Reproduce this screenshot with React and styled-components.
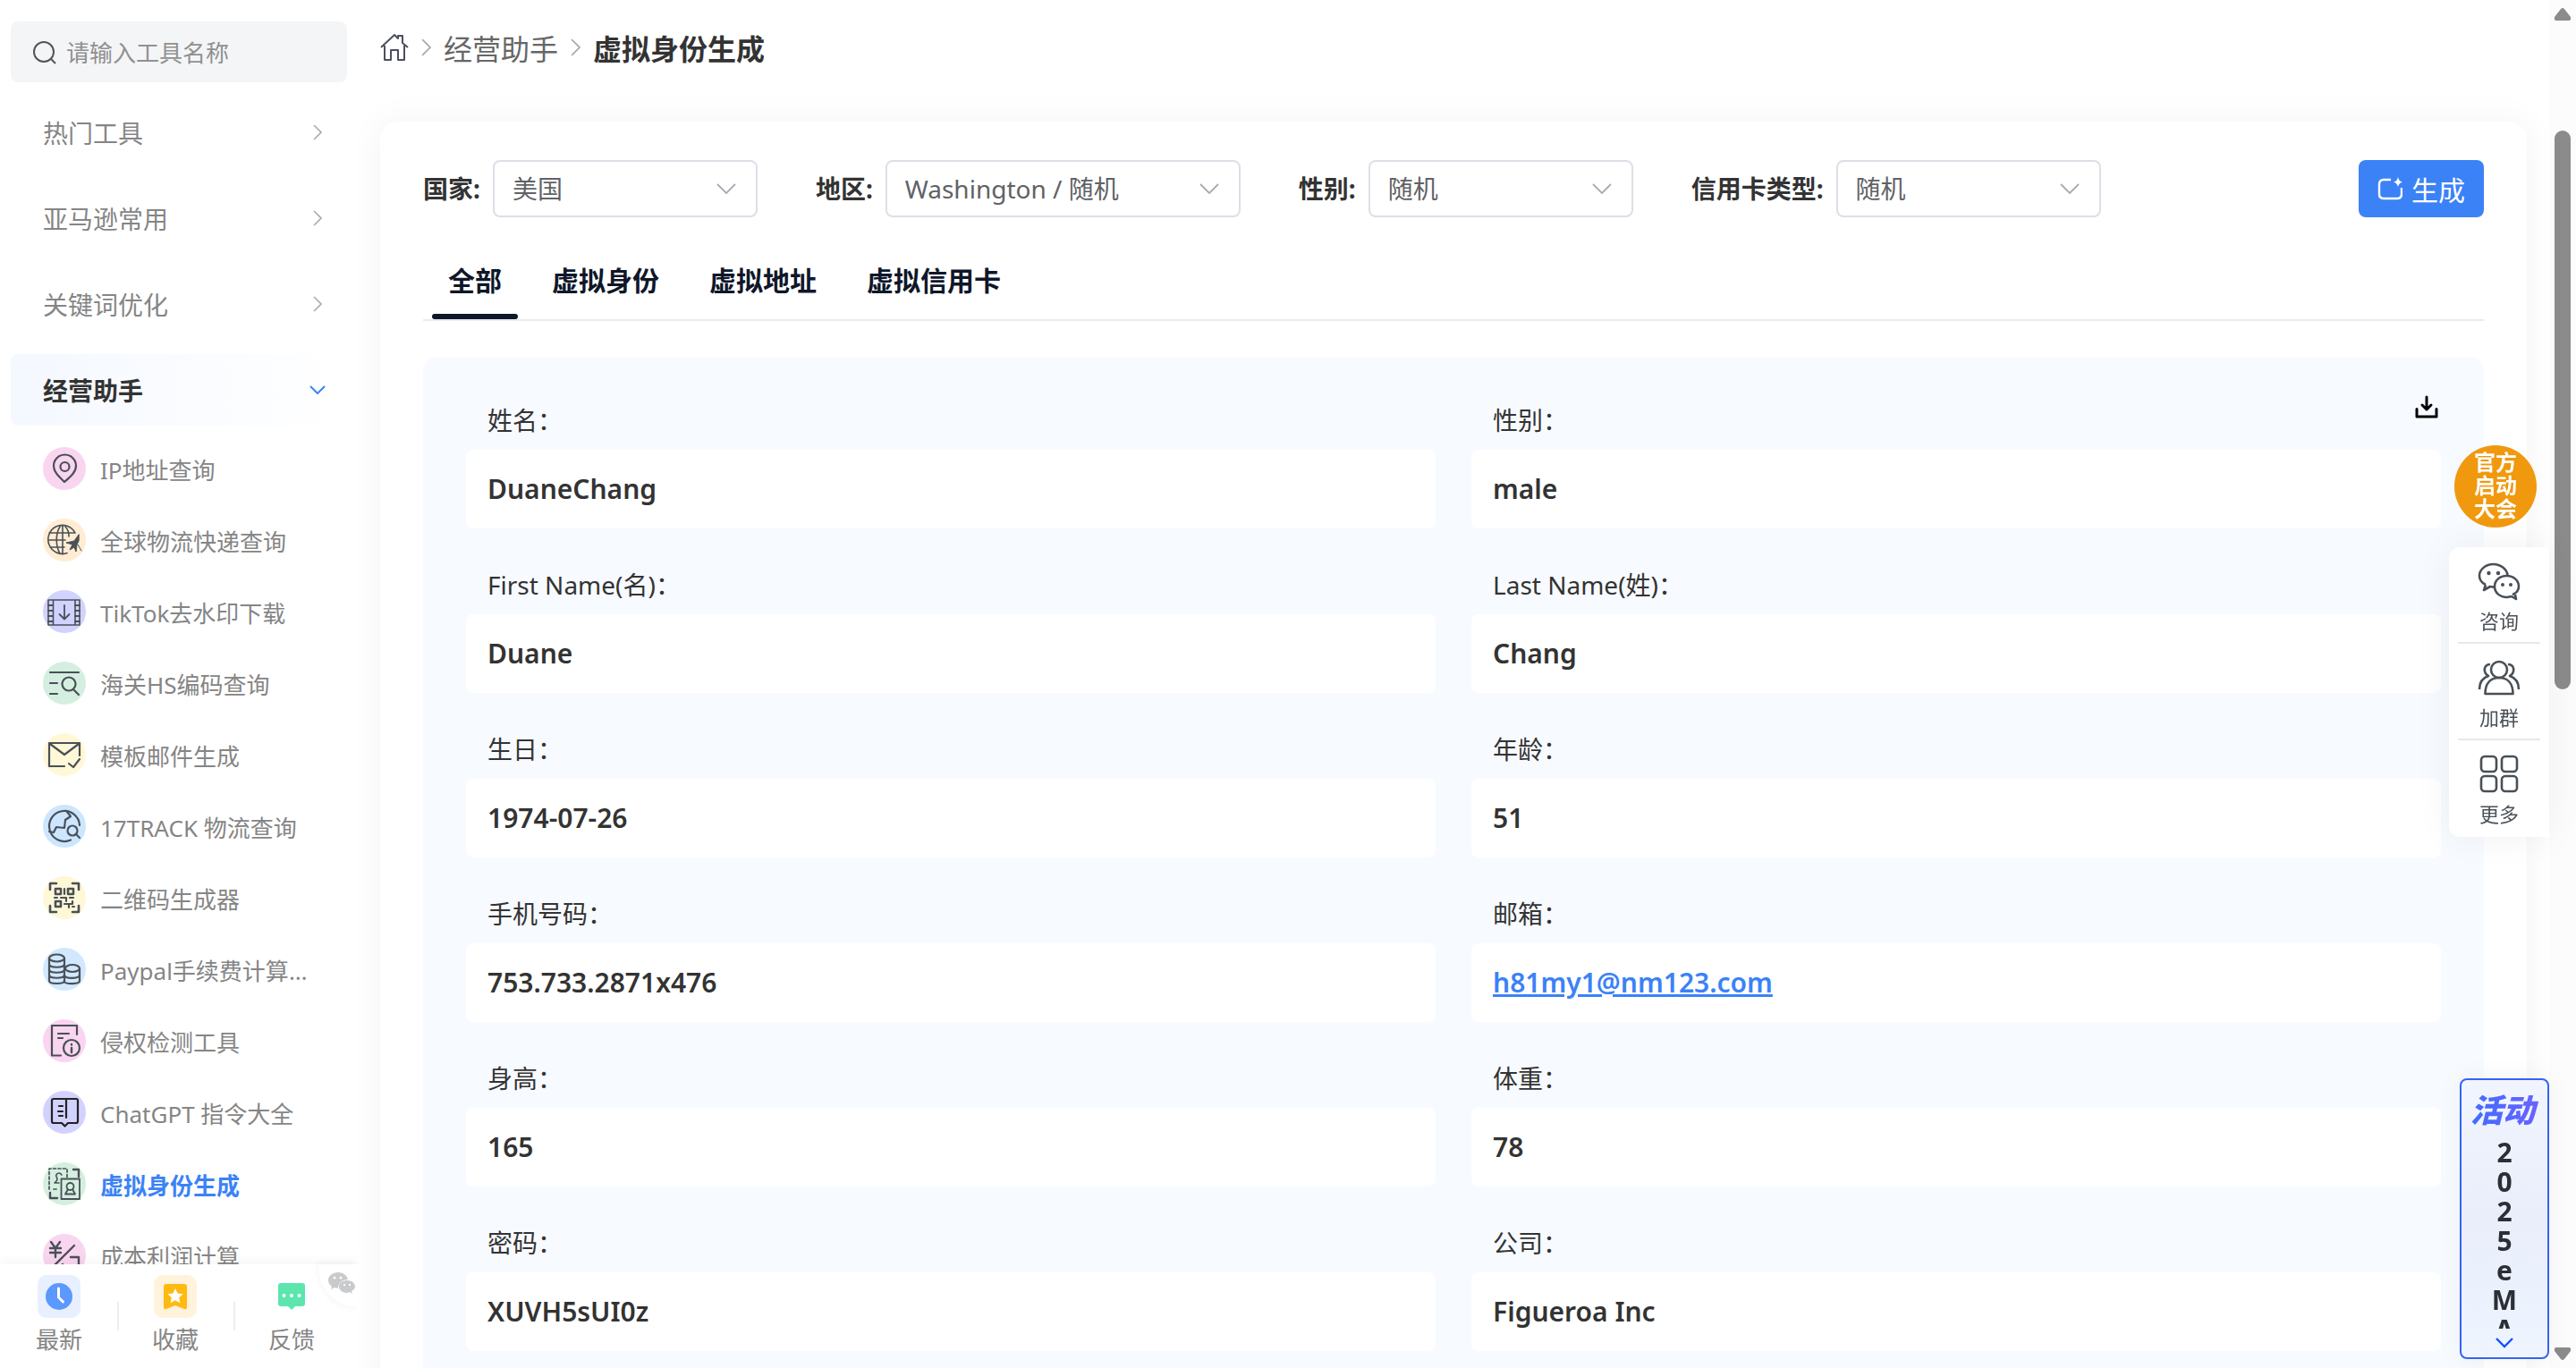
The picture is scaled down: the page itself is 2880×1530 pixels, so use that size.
import { useState } from "react";
import styled, { createGlobalStyle, css } from "styled-components";

const groups = ["热门工具", "亚马逊常用", "关键词优化"];

const tools = [
  { name: "IP地址查询", bg: "#f9d5f0", icon: "pin" },
  { name: "全球物流快递查询", bg: "#ffecd2", icon: "globe" },
  { name: "TikTok去水印下载", bg: "#d2d2ff", icon: "film" },
  { name: "海关HS编码查询", bg: "#d4efdf", icon: "search" },
  { name: "模板邮件生成", bg: "#fff8d6", icon: "mail" },
  { name: "17TRACK 物流查询", bg: "#cce6ff", icon: "track" },
  { name: "二维码生成器", bg: "#fff8d6", icon: "qr" },
  { name: "Paypal手续费计算器", bg: "#d2e8ff", icon: "coins" },
  { name: "侵权检测工具", bg: "#f9d5f0", icon: "doc" },
  { name: "ChatGPT 指令大全", bg: "#d2d2ff", icon: "book" },
  { name: "虚拟身份生成", bg: "#d4efdf", icon: "identity", active: true },
  { name: "成本利润计算", bg: "#f9d5f0", icon: "yen" },
];

const filters = [
  { id: "country", label: "国家:", value: "美国" },
  { id: "region", label: "地区:", value: "Washington / 随机", wide: true },
  { id: "gender", label: "性别:", value: "随机" },
  { id: "card", label: "信用卡类型:", value: "随机" },
];

const tabs = ["全部", "虚拟身份", "虚拟地址", "虚拟信用卡"];

const fields = [
  ["姓名：", "DuaneChang"],
  ["性别：", "male"],
  ["First Name(名)：", "Duane"],
  ["Last Name(姓)：", "Chang"],
  ["生日：", "1974-07-26"],
  ["年龄：", "51"],
  ["手机号码：", "753.733.2871x476"],
  ["邮箱：", "h81my1@nm123.com", true],
  ["身高：", "165"],
  ["体重：", "78"],
  ["密码：", "XUVH5sUI0z"],
  ["公司：", "Figueroa Inc"],
];

// every tool icon is drawn on a 48 x 48 board, the size of its circle
const toolIcons = {
  pin: (
    <>
      <path d="M24 39C18 33 12 28 12 21a12 12 0 0 1 25 0c0 7-6 12-13 18Z" />
      <circle cx="24.500" cy="22" r="5" />
    </>
  ),
  globe: (
    <>
      <path d="M36 16A16 16 0 1 0 27 38.500M22 8v32M7 16h29M7 24h18M8 32h16M19 9c-5 8-5 22 0 30M25 9c3 3 4 7 4 11" strokeWidth="1.600" />
      <path d="m40 18-5 7-9 2 7 2-3 6 5-3 2 5 1-8 2-4Zm-1 11 4 7" fill="#495057" strokeWidth="1" />
    </>
  ),
  film: (
    <>
      <path d="M6 11h35v28H6ZM11.500 11v28M36 11v28" strokeWidth="1.600" />
      <path d="M6 17h5M6 23h5M6 29h5M6 35h5M36 17h5M36 23h5M36 29h5M36 35h5" />
      <path d="M24 17v15M18.500 27l5.500 5.500 5.500-5.500" strokeWidth="1.800" />
    </>
  ),
  search: (
    <>
      <path d="M8 12h32M8 24h8M8 36h8" />
      <circle cx="29" cy="25" r="7.500" />
      <path d="m34 31 6 6" />
    </>
  ),
  mail: (
    <>
      <path d="M24 37H7V11h34v14M8 12l16 12L40 12" />
      <path d="m29 34 5 4 7-9" />
    </>
  ),
  track: (
    <>
      <path d="M41 23A17 17 0 1 0 31 39.500" />
      <path d="M27 8l4 5-6 4-1 9-9-1-3 6-5-1" />
      <circle cx="33" cy="29" r="5.500" />
      <path d="m37 33 4 4" />
    </>
  ),
  qr: (
    <>
      <path d="M8 15V8h7M33 8h7v7M40 33v7h-7M15 40H8v-7" strokeWidth="2.600" />
      <path d="M14 14h6v6h-6ZM28 14h6v6h-6ZM14 28h6v6h-6Z" strokeWidth="2.600" />
      <path d="M24 14v6M13 24h3M20 24h6v4M30 24h4M24 31h5v4M33 28v3h-4M33 34h2" strokeWidth="2.200" />
    </>
  ),
  coins: (
    <>
      <ellipse cx="15.500" cy="11.500" rx="8.500" ry="4" />
      <path d="M7 12v25c0 4 17 4 17 0V12M7 18c0 5 17 5 17 0M7 24c0 5 17 5 17 0M7 30c0 5 17 5 17 0" />
      <ellipse cx="33" cy="23" rx="8" ry="4" />
      <path d="M41 23v14c0 4-15 4-17 1M41 30c0 5-15 5-17 1" />
    </>
  ),
  doc: (
    <>
      <path d="M20 40.500H10V7h28v10M17 16h12M17 21h5" />
      <circle cx="32" cy="32" r="9" />
      <path d="M32 28v.500M32 32v5" strokeWidth="2.400" />
    </>
  ),
  book: (
    <g stroke="#222">
      <path d="M12 9h25q2 0 2 2v23q0 2-2 2h-9l-3.500 3.500L21 36h-9q-2 0-2-2V11q0-2 2-2ZM26 9v21" />
      <path d="M18 17h4M17 23h5M18 28h4" />
    </g>
  ),
  identity: (
    <>
      <path d="M7 30V7h20v10M12 30h4" strokeDasharray="3 2.500" strokeWidth="1.700" />
      <path d="M34 8h6v8M8 34v6h8" strokeWidth="2.400" />
      <path d="M21 14c-3-4-7-1-6 2 1 2 2 3 0 5l-2 2h5" strokeWidth="1.600" />
      <path d="M20.500 18.500H41V41H20.500Z" strokeWidth="1.800" />
      <circle cx="30.500" cy="27" r="4" strokeWidth="1.800" />
      <path d="M28 30l-3 5.500h11L33 30" strokeWidth="1.800" />
    </>
  ),
  yen: (
    <>
      <path d="m9 9 5 7 5-7M14 16v10M8 16h12M8 21h12M13 35l22-22" strokeWidth="2.400" />
      <path d="M31 26h9v11M22 34v6" strokeWidth="2.400" />
    </>
  ),
};

function ChevronDown() {
  return (
    <svg width="22" height="12" viewBox="0 0 22 12" fill="none" stroke="currentColor" strokeWidth="1.800">
      <path d="m1 1 10 10L21 1" />
    </svg>
  );
}

function ChevronRight({ size = 18 }) {
  return (
    <svg width={size / 2 + 1} height={size} viewBox="0 0 10 18" fill="none" stroke="#a8abb2" strokeWidth="1.600">
      <path d="m1 1 8 8-8 8" />
    </svg>
  );
}

function Field({ label, value, isLink }) {
  return (
    <FieldItem>
      <FieldLabel>{label}</FieldLabel>
      <FieldValue>
        {isLink ? <MailLink href={"mailto:" + value}>{value}</MailLink> : value}
      </FieldValue>
    </FieldItem>
  );
}

function Sidebar() {
  return (
    <SidebarWrap>
      <SearchBox>
        <svg width="28" height="28" viewBox="0 0 28 28" fill="none" stroke="#555" strokeWidth="2">
          <circle cx="13" cy="13" r="11" />
          <path d="m21 21 5 5" />
        </svg>
        <SearchInput type="text" aria-label="请输入工具名称" placeholder="请输入工具名称" />
      </SearchBox>
      {groups.map((name) => (
        <Group key={name}>
          {name}
          <ChevronRight />
        </Group>
      ))}
      <Group $open>
        经营助手
        <svg width="18" height="10" viewBox="0 0 18 10" fill="none" stroke="#3b82f6" strokeWidth="2">
          <path d="m1 1 8 8 8-8" />
        </svg>
      </Group>
      <ToolList>
        {tools.map((tool) => (
          <li key={tool.name}>
            <ToolLink href="#" $active={tool.active}>
              <ToolIcon viewBox="0 0 48 48">
                <circle cx="24" cy="24" r="24" fill={tool.bg} stroke="none" />
                {toolIcons[tool.icon]}
              </ToolIcon>
              <ToolName>{tool.name}</ToolName>
            </ToolLink>
          </li>
        ))}
      </ToolList>
      <BottomBar>
        <BottomButton>
          <BottomIcon $bg="#e8f0ff">
            <svg width="32" height="32" viewBox="0 0 32 32">
              <circle cx="16" cy="16" r="15" fill="#5b98ff" />
              <path d="M15.500 7v10l5 5" fill="none" stroke="#fff" strokeWidth="3" strokeLinecap="round" />
            </svg>
          </BottomIcon>
          最新
        </BottomButton>
        <BottomButton>
          <BottomIcon $bg="#fff3dc">
            <svg width="32" height="32" viewBox="0 0 32 32">
              <path d="M6 2h20q3 0 3 3v23q0 3-3 2l-10-4-10 4q-3 1-3-2V5q0-3 3-3Z" fill="#ffb910" />
              <path d="m16 7 2.600 5.500 6 .7-4.400 4.100 1.200 6-5.400-3-5.400 3 1.200-6-4.400-4.100 6-.7Z" fill="#fff" />
            </svg>
          </BottomIcon>
          收藏
        </BottomButton>
        <BottomButton>
          <BottomIcon>
            <svg width="32" height="32" viewBox="0 0 32 32">
              <path d="M4 1h24q3 0 3 3v20q0 3-3 3h-8l-4 4-4-4H4q-3 0-3-3V4q0-3 3-3Z" fill="#5ce6ae" />
              <g fill="#fff">
                <circle cx="7.500" cy="15" r="2" />
                <circle cx="16" cy="15" r="2" />
                <circle cx="24.500" cy="15" r="2" />
              </g>
            </svg>
          </BottomIcon>
          反馈
        </BottomButton>
        <CornerBadge>
          <svg width="30" height="25" viewBox="0 0 30 25" fill="#c8cacb">
            <path d="M11 0C5 0 0 4 0 9c0 3 2 5 4 7l-1 3 4-2 4 1c0-6 5-10 11-10C21 3 16 0 11 0Z" />
            <path d="M21 9c-5 0-9 3-9 7s4 7 9 7l3-1 3 2-1-3c2-1 4-3 4-5 0-4-4-7-9-7Z" />
            <g fill="#fff">
              <circle cx="7" cy="6" r="1.500" />
              <circle cx="14" cy="6" r="1.500" />
              <circle cx="18" cy="14" r="1.200" />
              <circle cx="24" cy="14" r="1.200" />
            </g>
          </svg>
        </CornerBadge>
      </BottomBar>
    </SidebarWrap>
  );
}

function FloatingTools() {
  return (
    <Floating>
      <EventBadge href="#">官方启动大会</EventBadge>
      <Dock>
        <DockButton>
          <DockIcon viewBox="0 0 48 44">
            <path d="M9 26c-4-2-7-6-7-10C2 9 9 3 17.500 3 26 3 33 9 33.500 15.500M9 26l-2 6 7-4 6 1" />
            <path d="M39 37c5-2 7-5 7-9 0-7-6-12-13.500-12S19 21 19 28s6 12 14 12l5-1 5 3-1-5" />
            <g fill="#495057" stroke="none">
              <circle cx="12.500" cy="13" r="2.200" />
              <circle cx="23" cy="13" r="2.200" />
              <circle cx="28" cy="26" r="2" />
              <circle cx="37" cy="26" r="2" />
            </g>
          </DockIcon>
          咨询
        </DockButton>
        <DockButton>
          <DockIcon viewBox="0 0 48 44">
            <circle cx="24" cy="13" r="9" />
            <path d="M8.500 40c0-12 6-18 15.500-18s15.500 6 15.500 18Z" />
            <path d="M14 7c-5 0-7 4-6 8 .5 2 2 4 4 5-6 2-10 7-10 15M34 7c5 0 7 4 6 8-.5 2-2 4-4 5 6 2 10 7 10 15" />
          </DockIcon>
          加群
        </DockButton>
        <DockButton>
          <DockIcon viewBox="0 0 48 44">
            <rect x="4" y="2" width="17" height="17" rx="4" />
            <rect x="27" y="2" width="17" height="17" rx="4" />
            <rect x="4" y="24" width="17" height="17" rx="4" />
            <rect x="27" y="24" width="17" height="17" rx="4" />
          </DockIcon>
          更多
        </DockButton>
      </Dock>
    </Floating>
  );
}

export default function App() {
  const [activeTab, setActiveTab] = useState("全部");

  return (
    <>
      <GlobalStyle />
      <Page>
        <Sidebar />
        <Main>
          <Breadcrumb>
            <HomeLink href="#" aria-label="首页">
              <svg width="32" height="32" viewBox="0 0 32 32" fill="none" stroke="#4b5060" strokeWidth="2" strokeLinejoin="round">
                <path d="M1 16 16 2l4 4V3h5v8l6 5M5 14v16h7V19h8v11h7V14" />
              </svg>
            </HomeLink>
            <ChevronRight size={20} />
            <CrumbLink href="#">经营助手</CrumbLink>
            <ChevronRight size={20} />
            <CrumbCurrent>虚拟身份生成</CrumbCurrent>
          </Breadcrumb>
          <Card>
            <Filters>
              {filters.map((f) => (
                <Filter key={f.id}>
                  <label htmlFor={f.id}>{f.label}</label>
                  <SelectWrap $wide={f.wide}>
                    <Select id={f.id}>
                      <option>{f.value}</option>
                    </Select>
                    <ChevronDown />
                  </SelectWrap>
                </Filter>
              ))}
              <GenerateButton>
                <svg width="28" height="26" viewBox="0 0 28 26" fill="none" stroke="#fff" strokeWidth="2.400">
                  <path d="M15 3H7Q2 3 2 8v11q0 5 5 5h15q5 0 5-5v-7" />
                  <path d="M23 0q1 5 5 5.500-4 1-5 5.500-1-4.500-5-5.500 4-.5 5-5.500Z" fill="#fff" stroke="none" />
                </svg>
                生成
              </GenerateButton>
            </Filters>
            <Tabs role="tablist">
              {tabs.map((tab) => (
                <Tab key={tab} role="tab" $active={tab === activeTab} onClick={() => setActiveTab(tab)}>
                  {tab}
                </Tab>
              ))}
            </Tabs>
            <Panel>
              <DownloadButton aria-label="下载">
                <svg width="26" height="26" viewBox="0 0 26 26" fill="none" stroke="#000" strokeWidth="3" strokeLinecap="round" strokeLinejoin="round">
                  <path d="M2 15.500V24h22v-8.500M13 2v13M8 11l5 5 5-5" />
                </svg>
              </DownloadButton>
              {fields.map(([label, value, isLink]) => (
                <Field key={label} label={label} value={value} isLink={isLink} />
              ))}
            </Panel>
          </Card>
        </Main>
        <ScrollTrack>
          <svg width="18" height="14" viewBox="0 0 18 14" fill="#8b8b8b">
            <path d="M9 0q1 0 2 1l7 9q1 4-2 4H2q-3 0-2-4l7-9q1-1 2-1Z" />
          </svg>
          <ScrollThumb />
          <svg width="18" height="14" viewBox="0 0 18 14" fill="#8b8b8b">
            <path d="M9 14q1 0 2-1l7-9q1-4-2-4H2Q-1 0 0 4l7 9q1 1 2 1Z" />
          </svg>
        </ScrollTrack>
        <FloatingTools />
        <Promo>
          <PromoTitle>活动</PromoTitle>
          <PromoText>2025eMA</PromoText>
          <PromoToggle aria-label="展开">
            <svg width="20" height="12" viewBox="0 0 20 12" fill="none" stroke="#1450ff" strokeWidth="2.400">
              <path d="m1 1 9 9 9-9" />
            </svg>
          </PromoToggle>
        </Promo>
      </Page>
    </>
  );
}

const GlobalStyle = createGlobalStyle`
  * {
    box-sizing: border-box;
  }

  body {
    margin: 0;
    background: #fff;
    color: #333;
    font-family: "Noto Sans", "Noto Sans CJK SC", sans-serif;
    font-size: 28px;
    overflow: hidden;
  }

  button, input, select {
    font: inherit;
    color: inherit;
    border: 0;
    padding: 0;
    background: none;
  }

  a {
    color: inherit;
    text-decoration: none;
  }

  ul, dl, dd {
    margin: 0;
    padding: 0;
    list-style: none;
  }
`;

const Page = styled.div`
  display: flex;
  height: 100vh;
  overflow: hidden;
`;

const SidebarWrap = styled.aside`
  position: relative;
  z-index: 1;
  flex: 0 0 400px;
  display: flex;
  flex-direction: column;
  gap: 16px;
  padding: 24px 12px 0;
  overflow: hidden;
  background: #fff;
`;

const SearchBox = styled.div`
  flex: none;
  display: flex;
  align-items: center;
  gap: 10px;
  height: 68px;
  padding: 2px 24px 0;
  border-radius: 8px;
  background: #f4f5f7;
`;

const SearchInput = styled.input`
  flex: 1;
  min-width: 0;
  font-size: 26px;
  outline: none;

  &::placeholder {
    color: #909090;
    opacity: 1;
  }
`;

const Group = styled.button`
  flex: none;
  display: flex;
  align-items: center;
  justify-content: space-between;
  height: 80px;
  padding: 0 28px 0 36px;
  border-radius: 8px;
  color: #858585;
  cursor: pointer;

  ${(props) =>
    props.$open &&
    css`
      padding-right: 24px;
      color: #333;
      font-weight: 700;
      background: linear-gradient(90deg, #f4f8ff, #fff);
    `}
`;

const ToolList = styled.ul`
  flex: 1;
  min-height: 0;
  margin-top: -8px;
  overflow: hidden;
`;

const ToolLink = styled.a`
  display: flex;
  align-items: center;
  gap: 16px;
  height: 80px;
  padding: 0 44px 0 36px;
  font-size: 26px;
  color: ${(props) => (props.$active ? "#3b82f6" : "#858585")};
  font-weight: ${(props) => (props.$active ? 700 : 400)};
`;

const ToolIcon = styled.svg`
  flex: none;
  width: 48px;
  height: 48px;
  fill: none;
  stroke: #495057;
  stroke-width: 2.2;
  stroke-linecap: round;
  stroke-linejoin: round;
`;

const ToolName = styled.span`
  padding-top: 2px;
  overflow: hidden;
  white-space: nowrap;
  text-overflow: ellipsis;
`;

const BottomBar = styled.div`
  position: relative;
  flex: none;
  display: grid;
  grid-template-columns: repeat(3, 1fr);
  height: 116px;
  margin: -16px -12px 0;
  padding: 0 9px 0 1px;
  background: #fff;
  box-shadow: 0 0 16px rgba(0, 0, 0, 0.06);
`;

const BottomButton = styled.button`
  position: relative;
  display: flex;
  flex-direction: column;
  align-items: center;
  gap: 6px;
  padding-top: 12px;
  color: #858585;
  font-size: 26px;
  line-height: 36px;

  & + &::before {
    content: "";
    position: absolute;
    left: 0;
    top: 42px;
    width: 2px;
    height: 32px;
    background: #ebebf2;
  }
`;

const BottomIcon = styled.span`
  display: grid;
  place-items: center;
  width: 48px;
  height: 48px;
  border-radius: 10px;
  background: ${(props) => props.$bg || "#fff"};
`;

const CornerBadge = styled.div`
  position: absolute;
  top: 0;
  right: 0;
  width: 44px;
  height: 48px;
  padding: 9px 0 0 11px;
  border-bottom-left-radius: 44px;
  line-height: 0;
  background: #fff;
  box-shadow: 0 0 8px rgba(0, 0, 0, 0.06);
`;

const Main = styled.main`
  flex: 1;
  min-width: 0;
  padding: 0 25px;
`;

const Breadcrumb = styled.nav`
  display: flex;
  align-items: center;
  gap: 14px;
  height: 136px;
  padding-bottom: 30px;
  font-size: 32px;
`;

const HomeLink = styled.a`
  line-height: 0;
`;

const CrumbLink = styled.a`
  color: #666;
`;

const CrumbCurrent = styled.strong`
  color: #333;
`;

const Card = styled.section`
  min-height: 1500px;
  padding: 43px 48px 48px;
  border-radius: 20px;
  background: #fff;
  box-shadow: 0 0 40px rgba(0, 0, 0, 0.05);
`;

const Filters = styled.div`
  display: flex;
  align-items: center;
  gap: 65px;
`;

const Filter = styled.div`
  display: flex;
  align-items: center;
  gap: 14px;
  font-weight: 700;

  label {
    padding-bottom: 2px;
  }
`;

const SelectWrap = styled.div`
  position: relative;
  width: ${(props) => (props.$wide ? 397 : 296)}px;
  height: 64px;
  color: #a8abb2;

  svg {
    position: absolute;
    right: 24px;
    top: 26px;
    pointer-events: none;
  }
`;

const Select = styled.select`
  width: 100%;
  height: 100%;
  padding: 0 56px 0 20px;
  border: 2px solid #dcdfe6;
  border-radius: 8px;
  appearance: none;
  color: #606266;
  background: #fff;
  font-weight: 400;
`;

const GenerateButton = styled.button`
  display: flex;
  align-items: center;
  justify-content: center;
  gap: 10px;
  width: 140px;
  height: 64px;
  margin-left: auto;
  border-radius: 8px;
  background: #3b82f6;
  color: #fff;
  font-size: 30px;
`;

const Tabs = styled.div`
  display: flex;
  gap: 20px;
  height: 88px;
  margin: 28px 0 40px;
  padding-left: 10px;
  border-bottom: 2px solid #ebebeb;
`;

const Tab = styled.button`
  position: relative;
  padding: 0 18px 4px;
  color: #0f172a;
  font-size: 30px;
  font-weight: 700;

  &::after {
    content: "";
    position: absolute;
    left: 0;
    right: 0;
    bottom: 0;
    height: 6px;
    border-radius: 3px;
    background: ${(props) => (props.$active ? "#0f172a" : "transparent")};
  }
`;

const Panel = styled.dl`
  position: relative;
  display: grid;
  grid-template-columns: 1fr 1fr;
  column-gap: 40px;
  padding: 8px 48px 48px;
  border-radius: 16px;
  background: #f7faff;
`;

const DownloadButton = styled.button`
  position: absolute;
  top: 43px;
  right: 51px;
  line-height: 0;
`;

const FieldItem = styled.div`
  height: 184px;
`;

const FieldLabel = styled.dt`
  padding: 43px 24px 13px;
  line-height: 40px;
`;

const FieldValue = styled.dd`
  height: 88px;
  padding: 0 24px;
  border-radius: 8px;
  background: #fff;
  font-size: 30px;
  font-weight: 600;
  line-height: 88px;
`;

const MailLink = styled.a`
  color: #3b82f6;
  text-decoration: underline;
`;

const ScrollTrack = styled.div`
  flex: 0 0 30px;
  display: flex;
  flex-direction: column;
  align-items: center;
  padding: 9px 0;
  background: #fcfcfc;
`;

const ScrollThumb = styled.div`
  width: 18px;
  height: 625px;
  margin: 123px 0 auto;
  border-radius: 9px;
  background: #8b8b8b;
`;

const Floating = styled.div`
  position: fixed;
  z-index: 2;
  top: 498px;
  right: 30px;
  width: 112px;
`;

const EventBadge = styled.a`
  display: block;
  width: 92px;
  height: 92px;
  margin: 0 0 22px 6px;
  padding: 6px 22px;
  border-radius: 50%;
  background: #f0990e;
  color: #fff;
  font-size: 24px;
  font-weight: 700;
  line-height: 26px;
`;

const Dock = styled.div`
  padding: 0 10px;
  border-radius: 12px 0 0 12px;
  background: #fff;
  box-shadow: 0 0 40px rgba(0, 0, 0, 0.06);
`;

const DockButton = styled.button`
  display: flex;
  flex-direction: column;
  align-items: center;
  gap: 6px;
  width: 100%;
  height: 108px;
  padding-top: 16px;
  color: #495057;
  font-size: 22px;
  line-height: 32px;

  &:not(:last-child) {
    border-bottom: 2px solid #e8e8e8;
  }
`;

const DockIcon = styled.svg`
  width: 48px;
  height: 44px;
  fill: none;
  stroke: #495057;
  stroke-width: 2.6;
  stroke-linejoin: round;
`;

const Promo = styled.aside`
  position: fixed;
  z-index: 2;
  right: 30px;
  bottom: 10px;
  width: 100px;
  height: 314px;
  border: 2px solid #3563f5;
  border-radius: 8px;
  background: linear-gradient(180deg, #f1f5ff, #e9eefa 50%, #eef5ff);
  box-shadow: 0 0 30px rgba(0, 0, 0, 0.05);
  text-align: center;
`;

const PromoTitle = styled.div`
  margin: 12px 8px 0;
  padding: 4px 4px 4px 0;
  font-size: 36px;
  font-style: italic;
  font-weight: 900;
  line-height: 36px;
  color: transparent;
  background: linear-gradient(90deg, #3f6dff, #6a63ff);
  background-clip: text;
`;

const PromoText = styled.div`
  width: 30px;
  height: 222px;
  margin: 0 auto;
  padding-top: 8px;
  overflow: hidden;
  color: #2b2f36;
  font-size: 30px;
  font-weight: 700;
  line-height: 33px;
  word-break: break-all;
`;

const PromoToggle = styled.button`
  display: block;
  margin: 10px auto 0;
  line-height: 0;
`;
